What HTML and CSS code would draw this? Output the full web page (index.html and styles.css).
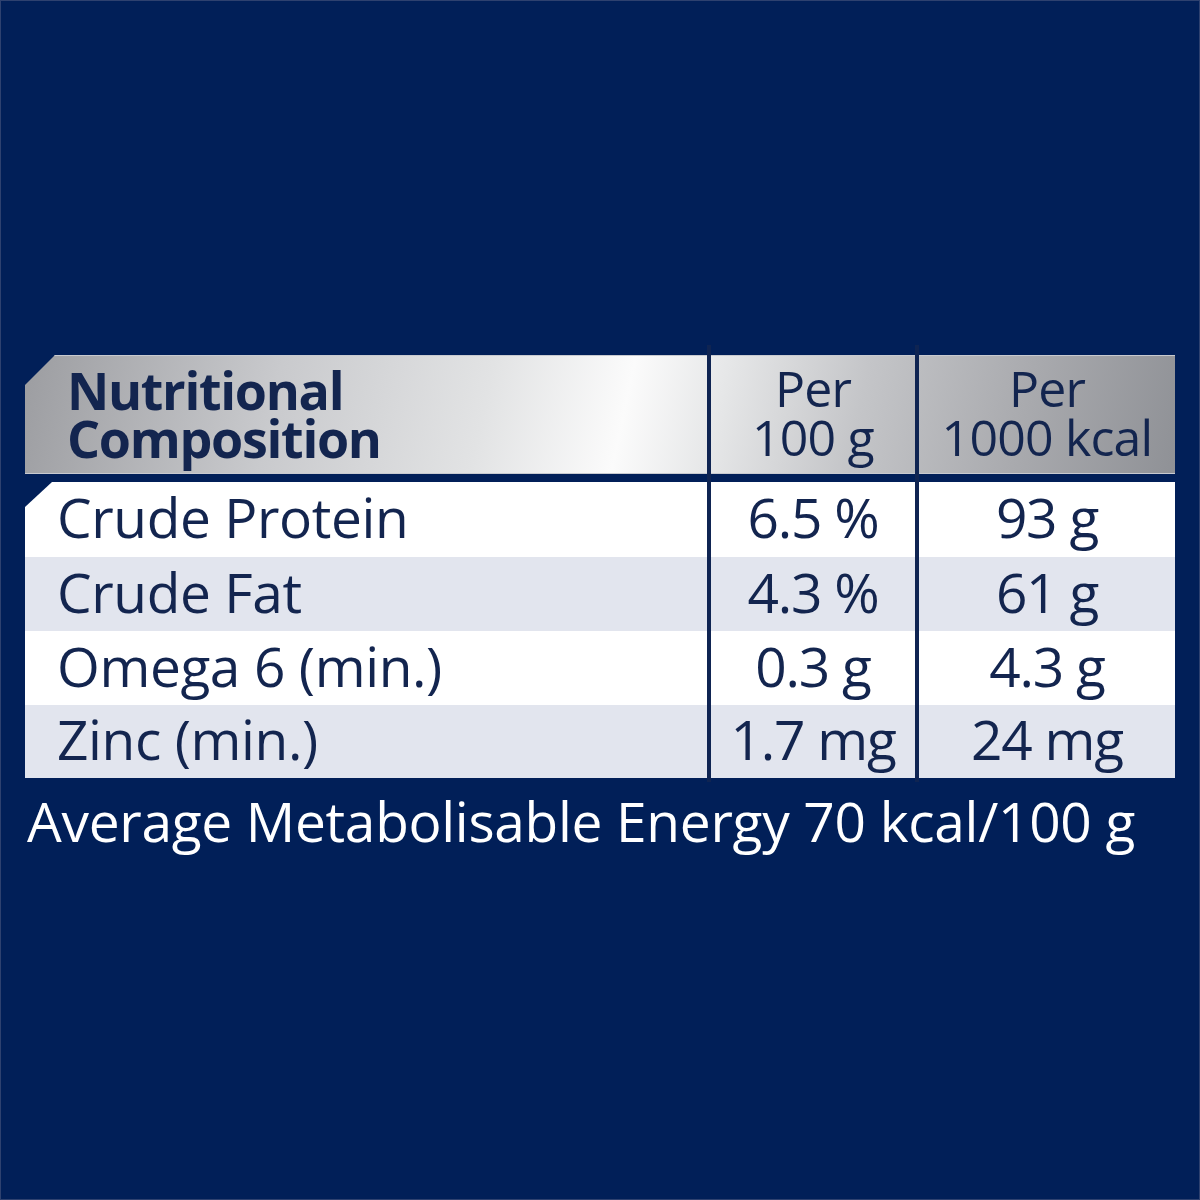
FILE: index.html
```html
<!DOCTYPE html>
<html lang="en">
<head>
<meta charset="utf-8">
<title>Nutritional Composition</title>
<link rel="stylesheet" href="styles.css">
</head>
<body>
<main class="page">
  <section class="table">
    <div class="band band-head"></div>
    <div class="cell head-label r-head">Nutritional<br>Composition</div>
    <div class="cell head-col c2 r-head">Per<br>100 g</div>
    <div class="cell head-col c3 r-head">Per<br>1000 kcal</div>

    <div class="band band-1 first"></div>
    <div class="cell label r1">Crude Protein</div>
    <div class="cell val c2 r1">6.5 %</div>
    <div class="cell val c3 r1">93 g</div>

    <div class="band band-2 alt"></div>
    <div class="cell label r2">Crude Fat</div>
    <div class="cell val c2 r2">4.3 %</div>
    <div class="cell val c3 r2">61 g</div>

    <div class="band band-3"></div>
    <div class="cell label r3">Omega 6 (min.)</div>
    <div class="cell val c2 r3">0.3 g</div>
    <div class="cell val c3 r3">4.3 g</div>

    <div class="band band-4 alt"></div>
    <div class="cell label r4">Zinc (min.)</div>
    <div class="cell val c2 r4">1.7 mg</div>
    <div class="cell val c3 r4">24 mg</div>

    <div class="divider d1"></div>
    <div class="divider d2"></div>
  </section>
  <p class="energy">Average Metabolisable Energy 70 kcal/100 g</p>
</main>
</body>
</html>
```

FILE: styles.css
```css
html, body {
  margin: 0;
  padding: 0;
}
body {
  width: 1200px;
  height: 1200px;
  background: #011f58;
  box-shadow: inset 0 0 0 1px #2e416f;
  font-family: "Open Sans", "Noto Sans", sans-serif;
  color: #13254f;
  overflow: hidden;
}
.page {
  padding-top: 345px;
  padding-left: 25px;
}
.table {
  display: grid;
  width: 1150px;
  grid-template-columns: 682px 4px 204px 4px 256px;
  grid-template-rows: 10px 119px 8px 75px 74px 74px 73px 4px;
}
.band {
  grid-column: 1 / -1;
  background: #ffffff;
}
.band.alt {
  background: #e2e5ee;
}
.band-head {
  grid-row: 2;
  background: linear-gradient(102deg, #9c9da1 0%, #c9cacd 22%, #e2e3e4 40%, #fbfbfb 52%, #e6e7e8 60%, #c4c5c8 72%, #a9aaae 86%, #8f9196 100%);
  box-shadow: inset 0 1px 0 #c8cad0, inset 0 -1px 0 #c8cad0;
  clip-path: polygon(30px 0, 100% 0, 100% 100%, 0 100%, 0 30px);
}
.band-1 { grid-row: 4; clip-path: polygon(27px 0, 100% 0, 100% 100%, 0 100%, 0 25px); }
.band-2 { grid-row: 5; }
.band-3 { grid-row: 6; }
.band-4 { grid-row: 7; }

.r-head { grid-row: 2; }
.r1 { grid-row: 4; }
.r2 { grid-row: 5; }
.r3 { grid-row: 6; }
.r4 { grid-row: 7; }
.c2 { grid-column: 3; }
.c3 { grid-column: 5; }

.cell {
  position: relative;
  display: flex;
  align-items: center;
  white-space: nowrap;
}
.head-label {
  grid-column: 1;
  padding-left: 42px;
  padding-bottom: 2px;
  font-weight: 700;
  font-size: 52px;
  line-height: 48px;
  letter-spacing: -1.3px;
}
.head-col {
  justify-content: center;
  text-align: center;
  padding-bottom: 4px;
  font-size: 50px;
  line-height: 49px;
  letter-spacing: -0.8px;
}
.label {
  grid-column: 1;
  padding-left: 32px;
  padding-bottom: 6px;
  font-size: 55px;
  letter-spacing: -0.4px;
}
.val {
  justify-content: center;
  padding-bottom: 6px;
  font-size: 55px;
  letter-spacing: -1.2px;
}
.divider {
  position: relative;
  grid-row: 1 / -1;
  background: #0f2452;
}
.d1 { grid-column: 2; }
.d2 { grid-column: 4; }
.energy {
  margin: 0;
  padding-left: 2px;
  padding-top: 4px;
  color: #ffffff;
  font-size: 55px;
  line-height: 70px;
  letter-spacing: -0.3px;
}
```
